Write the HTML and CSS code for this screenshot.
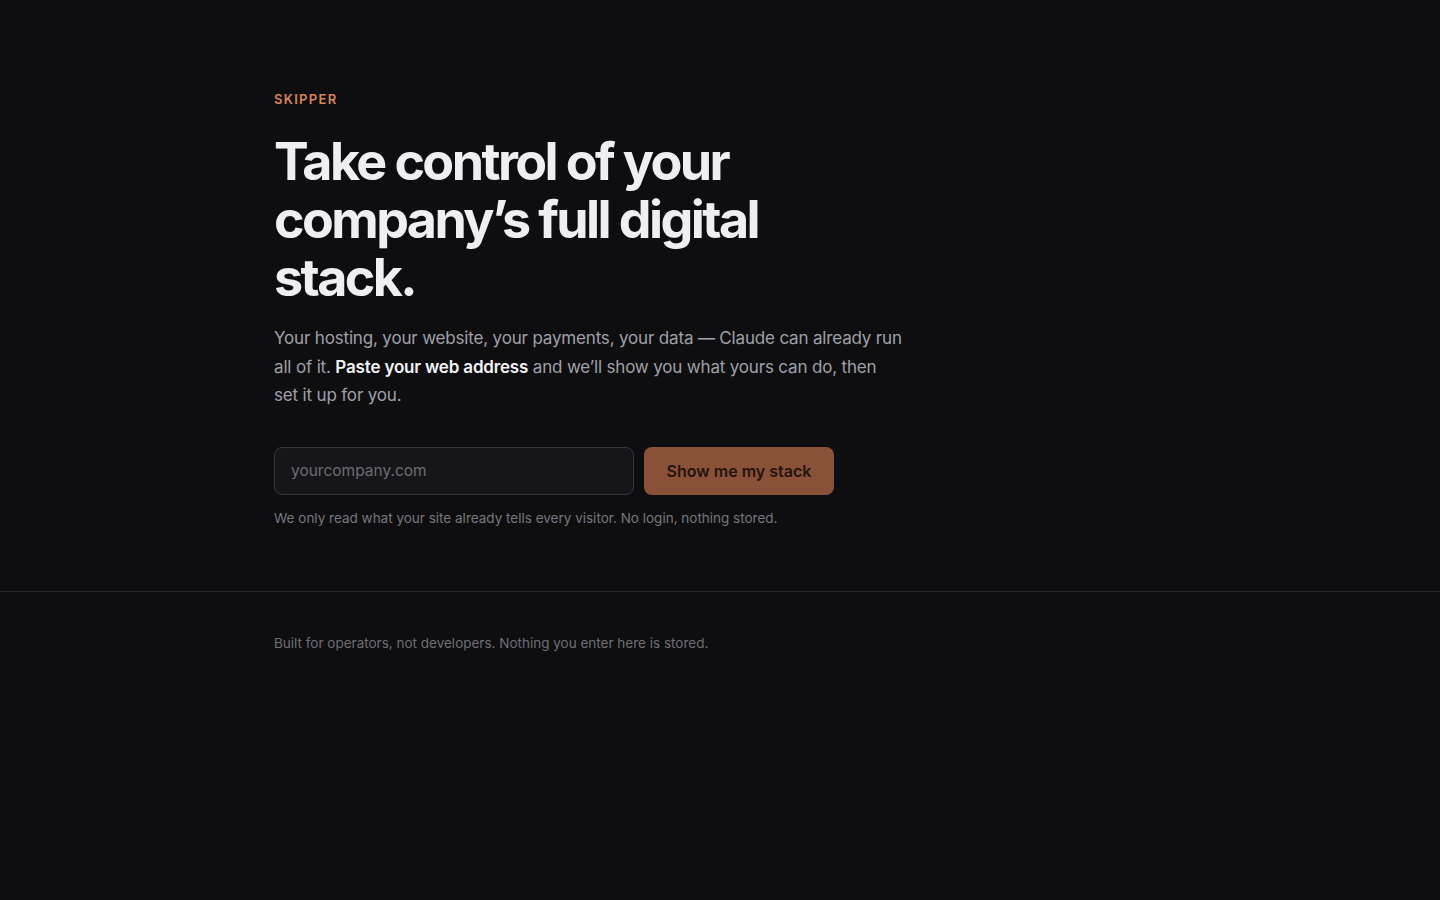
FILE: index.html
```html
<!DOCTYPE html>
<html lang="en">
<head>
<meta charset="utf-8">
<title>Skipper</title>
<link rel="stylesheet" href="styles.css">
</head>
<body>
<main class="hero">
  <div class="container">
    <div class="eyebrow">SKIPPER</div>
    <h1 class="headline">Take control of your company’s full digital stack.</h1>
    <p class="lead">Your hosting, your website, your payments, your data — Claude can already run all of it. <strong>Paste your web address</strong> and we’ll show you what yours can do, then set it up for you.</p>
    <form class="form">
      <input class="input" type="text" placeholder="yourcompany.com">
      <button class="button" type="button">Show me my stack</button>
    </form>
    <p class="note">We only read what your site already tells every visitor. No login, nothing stored.</p>
  </div>
</main>
<footer class="footer">
  <div class="container">
    <p class="footer-text">Built for operators, not developers. Nothing you enter here is stored.</p>
  </div>
</footer>
</body>
</html>
```
FILE: styles.css
```css
* { box-sizing: border-box; }
html, body { margin: 0; padding: 0; }
body {
  background: #0e0e11;
  color: #ececef;
  font-family: Inter, "Noto Sans", sans-serif;
  min-height: 100vh;
}
.container {
  width: 892px;
  margin: 0 auto;
}
.hero {
  padding: 91px 0 65px;
  border-bottom: 1px solid #26262b;
}
.eyebrow {
  font-size: 13px;
  font-weight: 600;
  letter-spacing: 0.1em;
  color: #d9835c;
  line-height: 16px;
}
.headline {
  margin: 26px 0 0;
  max-width: 560px;
  font-size: 52px;
  line-height: 58px;
  font-weight: 700;
  letter-spacing: -0.05em;
  color: #efeff2;
}
.lead {
  margin: 17px 0 0;
  max-width: 630px;
  font-size: 17px;
  line-height: 28.6px;
  letter-spacing: -0.01em;
  color: #a0a0a8;
}
.lead strong {
  color: #f2f2f4;
  font-weight: 600;
}
.form {
  display: flex;
  gap: 10px;
  margin-top: 37px;
}
.input {
  width: 360px;
  height: 48px;
  padding: 0 16px;
  background: #16161a;
  border: 1px solid #35353b;
  border-radius: 8px;
  color: #ececef;
  font-family: inherit;
  font-size: 15.5px;
  outline: none;
}
.input::placeholder { color: #6c6c74; }
.button {
  width: 190px;
  height: 48px;
  background: #8a5139;
  border: none;
  border-radius: 8px;
  color: #24140e;
  font-family: inherit;
  font-size: 16px;
  font-weight: 600;
  cursor: pointer;
}
.note {
  margin: 15px 0 0;
  font-size: 13.5px;
  line-height: 16px;
  color: #77777e;
}
.footer {
  padding-top: 43px;
}
.footer-text {
  margin: 0;
  font-size: 13.5px;
  line-height: 16px;
  color: #6e6e75;
}
```
